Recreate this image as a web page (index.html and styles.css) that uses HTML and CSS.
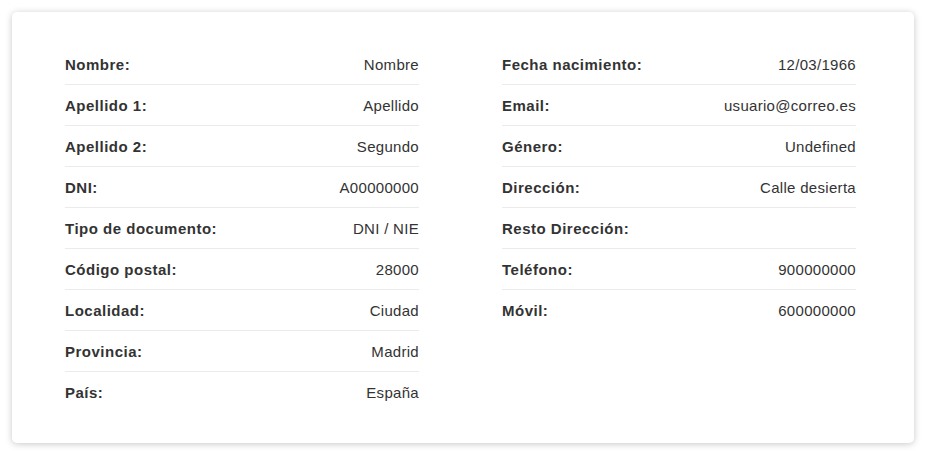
FILE: index.html
```html
<!DOCTYPE html>
<html lang="es">
<head>
<meta charset="utf-8">
<link rel="stylesheet" href="styles.css">
</head>
<body>
<div class="card">
  <div class="col">
    <div class="row"><span class="lbl">Nombre:</span><span class="val">Nombre</span></div>
    <div class="row"><span class="lbl">Apellido 1:</span><span class="val">Apellido</span></div>
    <div class="row"><span class="lbl">Apellido 2:</span><span class="val">Segundo</span></div>
    <div class="row"><span class="lbl">DNI:</span><span class="val">A00000000</span></div>
    <div class="row"><span class="lbl">Tipo de documento:</span><span class="val">DNI / NIE</span></div>
    <div class="row"><span class="lbl">Código postal:</span><span class="val">28000</span></div>
    <div class="row"><span class="lbl">Localidad:</span><span class="val">Ciudad</span></div>
    <div class="row"><span class="lbl">Provincia:</span><span class="val">Madrid</span></div>
    <div class="row"><span class="lbl">País:</span><span class="val">España</span></div>
  </div>
  <div class="col">
    <div class="row"><span class="lbl">Fecha nacimiento:</span><span class="val">12/03/1966</span></div>
    <div class="row"><span class="lbl">Email:</span><span class="val">usuario@correo.es</span></div>
    <div class="row"><span class="lbl">Género:</span><span class="val">Undefined</span></div>
    <div class="row"><span class="lbl">Dirección:</span><span class="val">Calle desierta</span></div>
    <div class="row"><span class="lbl">Resto Dirección:</span><span class="val"></span></div>
    <div class="row"><span class="lbl">Teléfono:</span><span class="val">900000000</span></div>
    <div class="row"><span class="lbl">Móvil:</span><span class="val">600000000</span></div>
  </div>
</div>
</body>
</html>
```

FILE: styles.css
```css
html, body {
  margin: 0;
  background: #fff;
}
body {
  padding: 12px;
  font-family: "Liberation Sans", Arial, sans-serif;
  font-size: 15px;
  color: #333;
}
.card {
  width: 902px;
  height: 431px;
  box-sizing: border-box;
  background: #fff;
  border-radius: 5px;
  box-shadow: 0 1px 7px rgba(0, 0, 0, 0.22);
  padding: 32px 58px 31px 53px;
  display: grid;
  grid-template-columns: 354px 354px;
  column-gap: 83px;
  align-items: start;
}
.row {
  display: flex;
  justify-content: space-between;
  line-height: 20px;
  padding: 11px 0 9px;
  border-bottom: 1px solid #ebebeb;
}
.row:last-child {
  border-bottom: none;
}
.lbl {
  font-weight: bold;
  letter-spacing: 0.5px;
}
.val {
  letter-spacing: 0.3px;
}
```
